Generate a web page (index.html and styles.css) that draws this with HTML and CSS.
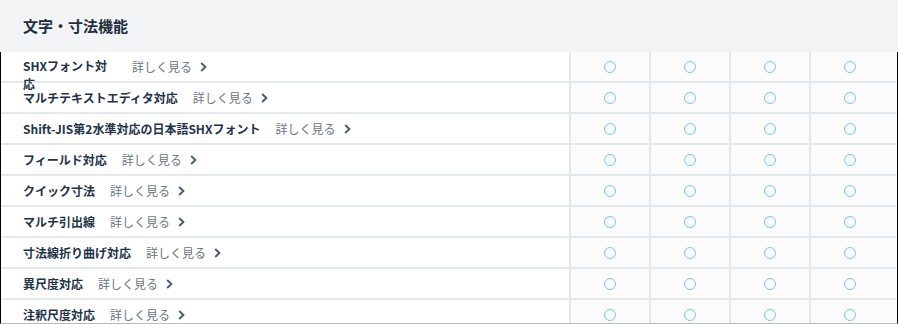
FILE: index.html
```html
<!DOCTYPE html>
<html lang="ja">
<head>
<meta charset="utf-8">
<title>文字・寸法機能</title>
<link rel="stylesheet" href="styles.css">
</head>
<body>
<div class="section-head"><h2 class="section-title">文字・寸法機能</h2></div>
<div class="table">
  <div class="row">
    <div class="name-cell"><span class="name narrow">SHXフォント対応</span><a class="more">詳しく見る<svg class="chev" viewBox="0 0 7 10" width="7" height="10"><path d="M1.2 1 L5.4 5 L1.2 9" /></svg></a></div>
    <div class="mark"><span class="circle"></span></div><div class="mark"><span class="circle"></span></div><div class="mark"><span class="circle"></span></div><div class="mark"><span class="circle"></span></div><div class="fill"></div>
  </div>
  <div class="row">
    <div class="name-cell"><span class="name">マルチテキストエディタ対応</span><a class="more">詳しく見る<svg class="chev" viewBox="0 0 7 10" width="7" height="10"><path d="M1.2 1 L5.4 5 L1.2 9" /></svg></a></div>
    <div class="mark"><span class="circle"></span></div><div class="mark"><span class="circle"></span></div><div class="mark"><span class="circle"></span></div><div class="mark"><span class="circle"></span></div><div class="fill"></div>
  </div>
  <div class="row">
    <div class="name-cell"><span class="name">Shift-JIS第2水準対応の日本語SHXフォント</span><a class="more">詳しく見る<svg class="chev" viewBox="0 0 7 10" width="7" height="10"><path d="M1.2 1 L5.4 5 L1.2 9" /></svg></a></div>
    <div class="mark"><span class="circle"></span></div><div class="mark"><span class="circle"></span></div><div class="mark"><span class="circle"></span></div><div class="mark"><span class="circle"></span></div><div class="fill"></div>
  </div>
  <div class="row">
    <div class="name-cell"><span class="name">フィールド対応</span><a class="more">詳しく見る<svg class="chev" viewBox="0 0 7 10" width="7" height="10"><path d="M1.2 1 L5.4 5 L1.2 9" /></svg></a></div>
    <div class="mark"><span class="circle"></span></div><div class="mark"><span class="circle"></span></div><div class="mark"><span class="circle"></span></div><div class="mark"><span class="circle"></span></div><div class="fill"></div>
  </div>
  <div class="row">
    <div class="name-cell"><span class="name">クイック寸法</span><a class="more">詳しく見る<svg class="chev" viewBox="0 0 7 10" width="7" height="10"><path d="M1.2 1 L5.4 5 L1.2 9" /></svg></a></div>
    <div class="mark"><span class="circle"></span></div><div class="mark"><span class="circle"></span></div><div class="mark"><span class="circle"></span></div><div class="mark"><span class="circle"></span></div><div class="fill"></div>
  </div>
  <div class="row">
    <div class="name-cell"><span class="name">マルチ引出線</span><a class="more">詳しく見る<svg class="chev" viewBox="0 0 7 10" width="7" height="10"><path d="M1.2 1 L5.4 5 L1.2 9" /></svg></a></div>
    <div class="mark"><span class="circle"></span></div><div class="mark"><span class="circle"></span></div><div class="mark"><span class="circle"></span></div><div class="mark"><span class="circle"></span></div><div class="fill"></div>
  </div>
  <div class="row">
    <div class="name-cell"><span class="name">寸法線折り曲げ対応</span><a class="more">詳しく見る<svg class="chev" viewBox="0 0 7 10" width="7" height="10"><path d="M1.2 1 L5.4 5 L1.2 9" /></svg></a></div>
    <div class="mark"><span class="circle"></span></div><div class="mark"><span class="circle"></span></div><div class="mark"><span class="circle"></span></div><div class="mark"><span class="circle"></span></div><div class="fill"></div>
  </div>
  <div class="row">
    <div class="name-cell"><span class="name">異尺度対応</span><a class="more">詳しく見る<svg class="chev" viewBox="0 0 7 10" width="7" height="10"><path d="M1.2 1 L5.4 5 L1.2 9" /></svg></a></div>
    <div class="mark"><span class="circle"></span></div><div class="mark"><span class="circle"></span></div><div class="mark"><span class="circle"></span></div><div class="mark"><span class="circle"></span></div><div class="fill"></div>
  </div>
  <div class="row">
    <div class="name-cell"><span class="name">注釈尺度対応</span><a class="more">詳しく見る<svg class="chev" viewBox="0 0 7 10" width="7" height="10"><path d="M1.2 1 L5.4 5 L1.2 9" /></svg></a></div>
    <div class="mark"><span class="circle"></span></div><div class="mark"><span class="circle"></span></div><div class="mark"><span class="circle"></span></div><div class="mark"><span class="circle"></span></div><div class="fill"></div>
  </div>
</div>
</body>
</html>
```

FILE: styles.css
```css
* { box-sizing: border-box; }
html, body {
  margin: 0;
  padding: 0;
  background: #ffffff;
  font-family: "Noto Sans CJK JP", "Noto Sans", sans-serif;
}
.section-head {
  height: 52px;
  background: #f3f4f6;
  display: flex;
  align-items: center;
  padding-left: 23px;
}
.section-title {
  margin: 0;
  font-size: 15px;
  font-weight: 700;
  color: #1f2f40;
  line-height: 20px;
  padding-bottom: 1px;
}
.table {
  height: 272px;
  overflow: hidden;
  border-left: 1px solid #000;
  border-right: 1px solid #000;
  border-bottom: 1px solid #b9bcbf;
  background: #ffffff;
}
.row {
  display: grid;
  grid-template-columns: 568px repeat(4, 80px) 1fr;
  height: 31px;
  border-bottom: 2px solid #e3e8ec;
}
.name-cell {
  display: flex;
  align-items: flex-start;
  gap: 15px;
  padding: 5px 0 0 22px;
  height: 29px;
  overflow: visible;
  white-space: nowrap;
}
.name {
  font-size: 12px;
  font-weight: 700;
  color: #1e3348;
  line-height: 19px;
}
.name.narrow {
  width: 94px;
  white-space: normal;
  line-height: 18px;
}
.more {
  display: flex;
  align-items: center;
  gap: 8px;
  font-size: 12px;
  color: #6c7683;
  line-height: 19px;
  text-decoration: none;
}
.chev {
  display: block;
  fill: none;
  stroke: #465a72;
  stroke-width: 1.9;
}
.mark {
  border-left: 2px solid #e3e8ec;
  background: #fbfbfb;
  display: flex;
  align-items: center;
  justify-content: center;
  height: 29px;
}
.circle {
  display: block;
  width: 12px;
  height: 12px;
  border-radius: 50%;
  border: 1px solid #72c8ee;
  margin-top: 1px;
}
.fill {
  background: #fbfbfb;
  height: 29px;
}
```
